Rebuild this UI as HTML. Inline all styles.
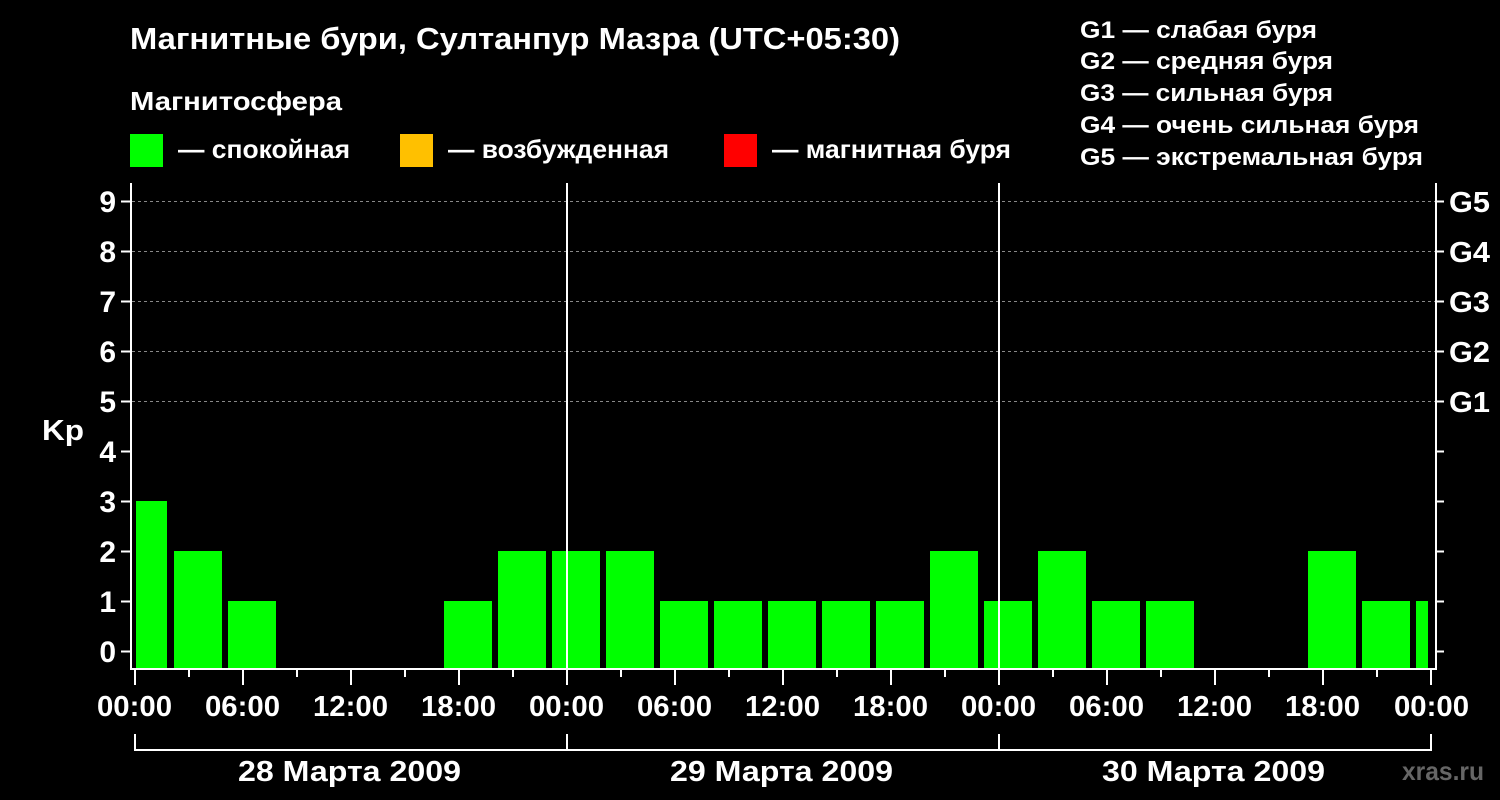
<!DOCTYPE html>
<html><head><meta charset="utf-8"><style>
html,body{margin:0;padding:0;background:#000;}
svg{display:block;}
text{font-family:"Liberation Sans",sans-serif;font-weight:bold;fill:#fff;}
</style></head><body>
<svg width="1500" height="800" viewBox="0 0 1500 800" xmlns="http://www.w3.org/2000/svg">
<rect width="1500" height="800" fill="#000"/>
<text x="130" y="49" font-size="31" textLength="770" lengthAdjust="spacingAndGlyphs">Магнитные бури, Султанпур Мазра (UTC+05:30)</text>
<text x="130" y="110" font-size="26" textLength="212" lengthAdjust="spacingAndGlyphs">Магнитосфера</text>
<rect x="130" y="134" width="33" height="33" fill="#00ff00"/>
<text x="178" y="158" font-size="26" textLength="172" lengthAdjust="spacingAndGlyphs">— спокойная</text>
<rect x="400" y="134" width="33" height="33" fill="#ffc000"/>
<text x="448" y="158" font-size="26" textLength="221" lengthAdjust="spacingAndGlyphs">— возбужденная</text>
<rect x="724" y="134" width="33" height="33" fill="#ff0000"/>
<text x="772" y="158" font-size="26" textLength="239" lengthAdjust="spacingAndGlyphs">— магнитная буря</text>
<g font-size="24">
<text x="1080" y="38" textLength="237" lengthAdjust="spacingAndGlyphs">G1 — слабая буря</text>
<text x="1080" y="69" textLength="253" lengthAdjust="spacingAndGlyphs">G2 — средняя буря</text>
<text x="1080" y="101" textLength="253" lengthAdjust="spacingAndGlyphs">G3 — сильная буря</text>
<text x="1080" y="133" textLength="339" lengthAdjust="spacingAndGlyphs">G4 — очень сильная буря</text>
<text x="1080" y="165" textLength="343" lengthAdjust="spacingAndGlyphs">G5 — экстремальная буря</text>
</g>
<g stroke="#888" stroke-dasharray="3,3" stroke-width="1">
<line x1="132" x2="1436" y1="201.5" y2="201.5"/>
<line x1="132" x2="1436" y1="251.5" y2="251.5"/>
<line x1="132" x2="1436" y1="301.5" y2="301.5"/>
<line x1="132" x2="1436" y1="351.5" y2="351.5"/>
<line x1="132" x2="1436" y1="401.5" y2="401.5"/>
</g>
<g fill="#00ff00">
<rect x="136" y="501" width="31" height="167"/>
<rect x="174" y="551" width="48" height="117"/>
<rect x="228" y="601" width="48" height="67"/>
<rect x="444" y="601" width="48" height="67"/>
<rect x="498" y="551" width="48" height="117"/>
<rect x="552" y="551" width="48" height="117"/>
<rect x="606" y="551" width="48" height="117"/>
<rect x="660" y="601" width="48" height="67"/>
<rect x="714" y="601" width="48" height="67"/>
<rect x="768" y="601" width="48" height="67"/>
<rect x="822" y="601" width="48" height="67"/>
<rect x="876" y="601" width="48" height="67"/>
<rect x="930" y="551" width="48" height="117"/>
<rect x="984" y="601" width="48" height="67"/>
<rect x="1038" y="551" width="48" height="117"/>
<rect x="1092" y="601" width="48" height="67"/>
<rect x="1146" y="601" width="48" height="67"/>
<rect x="1308" y="551" width="48" height="117"/>
<rect x="1362" y="601" width="48" height="67"/>
<rect x="1416" y="601" width="12" height="67"/>
</g>
<g stroke="#fff" stroke-width="2" fill="none">
<line x1="131" y1="183" x2="131" y2="670"/>
<line x1="1436" y1="183" x2="1436" y2="670"/>
<line x1="130" y1="669" x2="1437" y2="669"/>
<line x1="567" y1="183" x2="567" y2="668"/>
<line x1="999" y1="183" x2="999" y2="668"/>
<path d="M121 201.5h10M121 251.5h10M121 301.5h10M121 351.5h10M121 401.5h10M121 451.5h10M121 501.5h10M121 551.5h10M121 601.5h10M121 651.5h10"/>
<path d="M1436 201.5h8M1436 251.5h8M1436 301.5h8M1436 351.5h8M1436 401.5h8M1436 451.5h8M1436 501.5h8M1436 551.5h8M1436 601.5h8M1436 651.5h8"/>
<path d="M135 670v15M243 670v15M351 670v15M459 670v15M567 670v15M675 670v15M783 670v15M891 670v15M999 670v15M1107 670v15M1215 670v15M1323 670v15M1431 670v15"/>
<path d="M189 670v7M297 670v7M405 670v7M513 670v7M621 670v7M729 670v7M837 670v7M945 670v7M1053 670v7M1161 670v7M1269 670v7M1377 670v7"/>
<path d="M135 734v16h1296v-16M567 734v16M999 734v16"/>
</g>
<g font-size="30" text-anchor="end">
<text x="116" y="212">9</text><text x="116" y="262">8</text><text x="116" y="312">7</text>
<text x="116" y="362">6</text><text x="116" y="412">5</text><text x="116" y="462">4</text>
<text x="116" y="512">3</text><text x="116" y="562">2</text><text x="116" y="612">1</text>
<text x="116" y="662">0</text>
</g>
<text x="42" y="440" font-size="29" textLength="42" lengthAdjust="spacingAndGlyphs">Kp</text>
<g font-size="29">
<text x="1449" y="212" textLength="41" lengthAdjust="spacingAndGlyphs">G5</text><text x="1449" y="262" textLength="41" lengthAdjust="spacingAndGlyphs">G4</text><text x="1449" y="312" textLength="41" lengthAdjust="spacingAndGlyphs">G3</text>
<text x="1449" y="362" textLength="41" lengthAdjust="spacingAndGlyphs">G2</text><text x="1449" y="412" textLength="41" lengthAdjust="spacingAndGlyphs">G1</text>
</g>
<g font-size="29">
<text x="97" y="716" textLength="75" lengthAdjust="spacingAndGlyphs">00:00</text>
<text x="205" y="716" textLength="75" lengthAdjust="spacingAndGlyphs">06:00</text>
<text x="313" y="716" textLength="75" lengthAdjust="spacingAndGlyphs">12:00</text>
<text x="421" y="716" textLength="75" lengthAdjust="spacingAndGlyphs">18:00</text>
<text x="529" y="716" textLength="75" lengthAdjust="spacingAndGlyphs">00:00</text>
<text x="637" y="716" textLength="75" lengthAdjust="spacingAndGlyphs">06:00</text>
<text x="745" y="716" textLength="75" lengthAdjust="spacingAndGlyphs">12:00</text>
<text x="853" y="716" textLength="75" lengthAdjust="spacingAndGlyphs">18:00</text>
<text x="961" y="716" textLength="75" lengthAdjust="spacingAndGlyphs">00:00</text>
<text x="1069" y="716" textLength="75" lengthAdjust="spacingAndGlyphs">06:00</text>
<text x="1177" y="716" textLength="75" lengthAdjust="spacingAndGlyphs">12:00</text>
<text x="1285" y="716" textLength="75" lengthAdjust="spacingAndGlyphs">18:00</text>
<text x="1394" y="716" textLength="75" lengthAdjust="spacingAndGlyphs">00:00</text>
<text x="238" y="781" textLength="223" lengthAdjust="spacingAndGlyphs">28 Марта 2009</text>
<text x="670" y="781" textLength="223" lengthAdjust="spacingAndGlyphs">29 Марта 2009</text>
<text x="1102" y="781" textLength="223" lengthAdjust="spacingAndGlyphs">30 Марта 2009</text>
</g>
<text x="1402" y="780" font-size="26" textLength="82" lengthAdjust="spacingAndGlyphs" style="fill:#666">xras.ru</text>
</svg>
</body></html>
